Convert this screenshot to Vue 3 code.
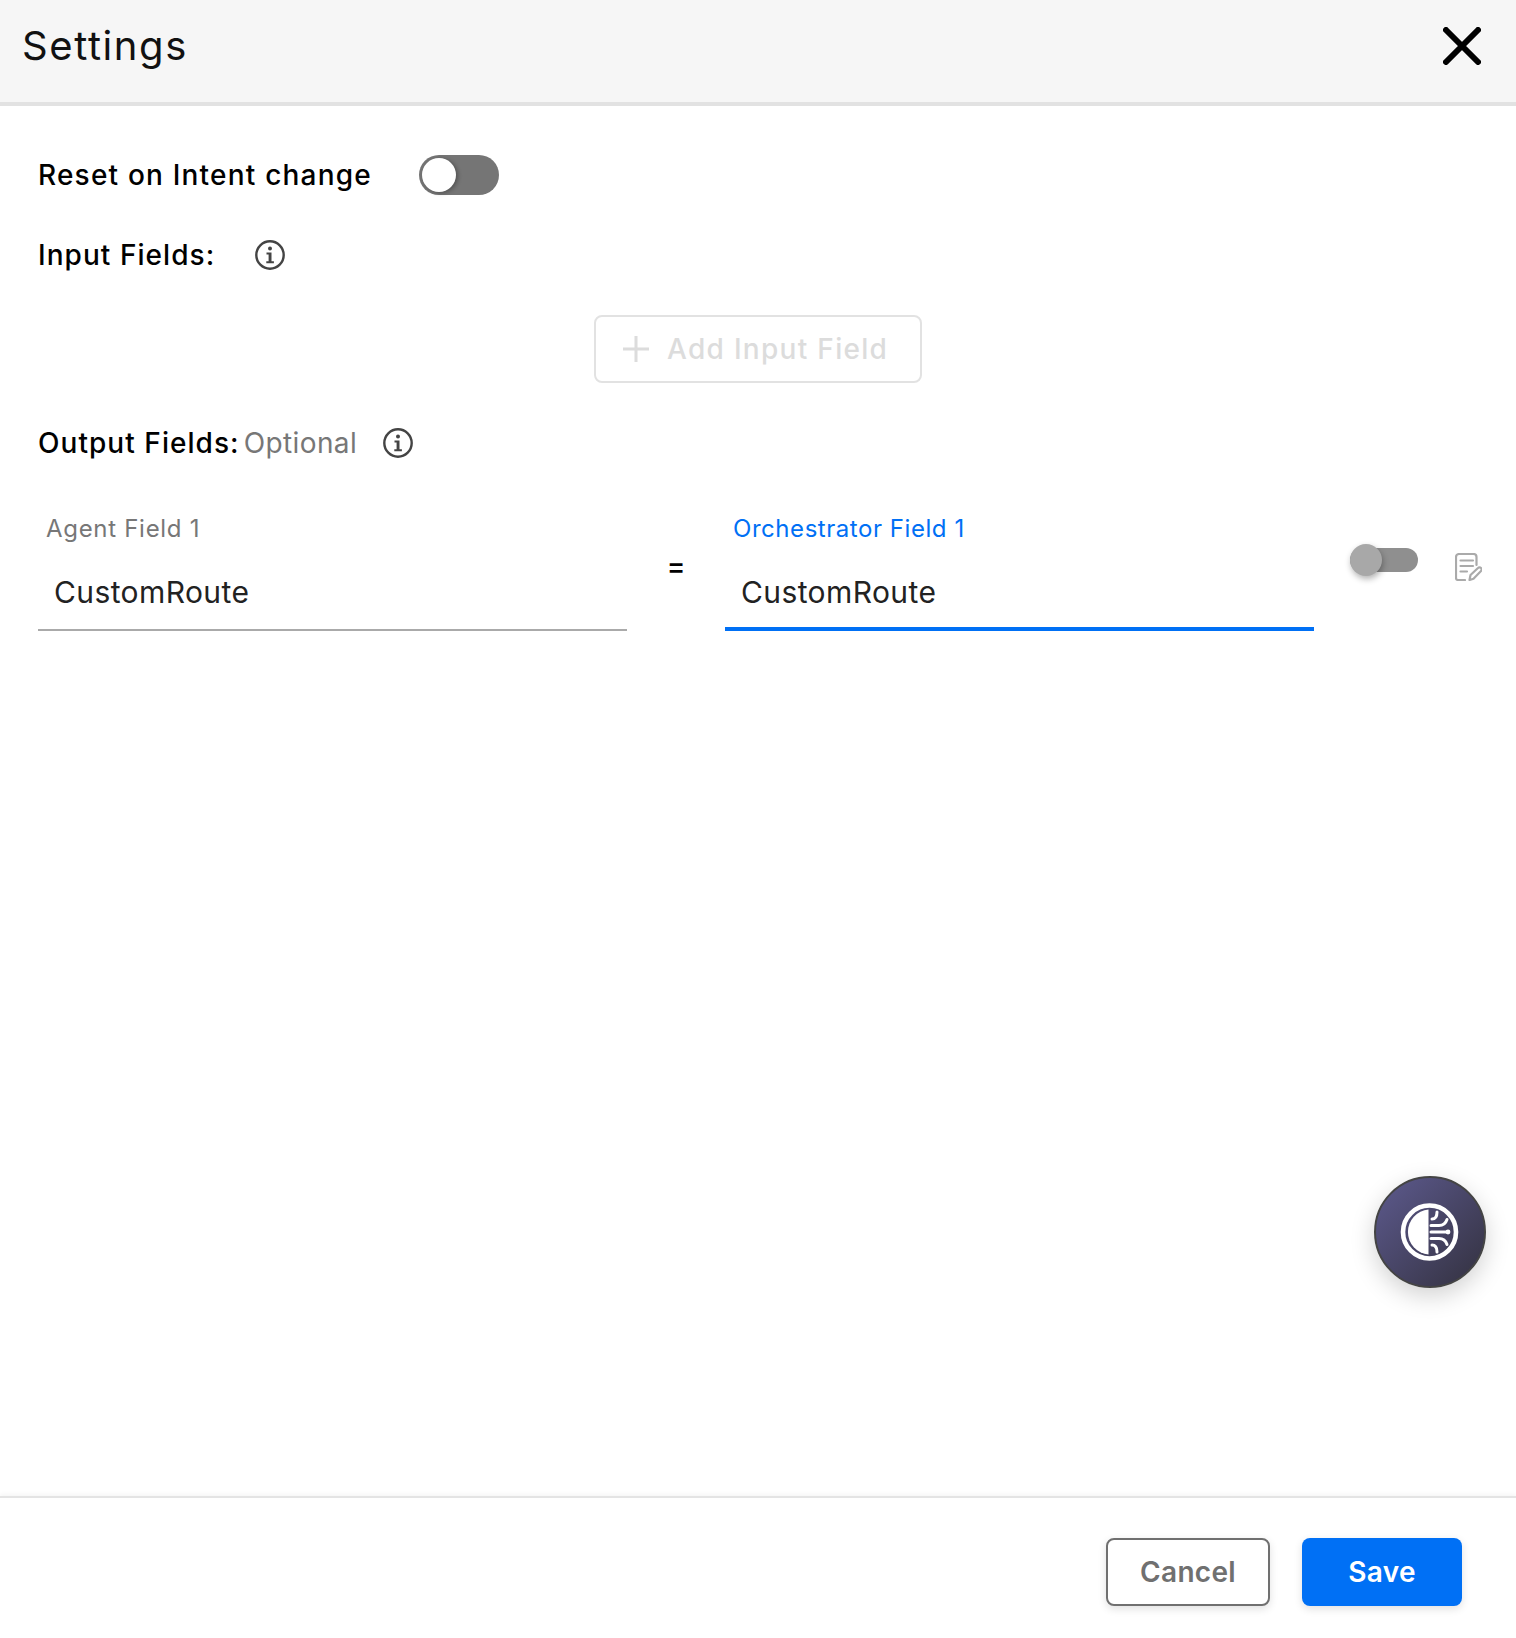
<template>
  <div class="page">
    <header class="head">
      <h1 class="title">Settings</h1>
      <svg class="close" viewBox="0 0 38 38" aria-label="Close">
        <path d="M3 3L35 35M35 3L3 35" stroke="#000" stroke-width="6" stroke-linecap="round" fill="none" />
      </svg>
    </header>

    <main class="body">
      <div class="row">
        <span class="label reset-label">Reset on Intent change</span>
        <div class="switch"><span class="switch-knob"></span></div>
      </div>

      <div class="row row-info">
        <span class="label">Input Fields:</span>
        <svg class="info info-input" viewBox="0 0 30 30">
          <circle cx="15" cy="15" r="13.7" fill="none" stroke="#444" stroke-width="2.4" />
          <circle cx="15" cy="8.6" r="2" fill="#444" />
          <path d="M11.5 12.6h5v8.6h2.4v2h-7.6v-2h2.3v-6.6h-2.1z" fill="#444" />
        </svg>
      </div>

      <div class="add-wrap">
        <button class="add" type="button">
          <svg class="plus" viewBox="0 0 26 26">
            <path d="M13 0V26M0 13H26" stroke="#dcdcdc" stroke-width="3" fill="none" />
          </svg>
          Add Input Field
        </button>
      </div>

      <div class="row row-info">
        <span class="label">Output Fields:</span>
        <span class="optional">Optional</span>
        <svg class="info info-output" viewBox="0 0 30 30">
          <circle cx="15" cy="15" r="13.7" fill="none" stroke="#444" stroke-width="2.4" />
          <circle cx="15" cy="8.6" r="2" fill="#444" />
          <path d="M11.5 12.6h5v8.6h2.4v2h-7.6v-2h2.3v-6.6h-2.1z" fill="#444" />
        </svg>
      </div>

      <div class="mapping">
        <div class="field">
          <div class="field-label agent-label">Agent Field 1</div>
          <div class="field-value">CustomRoute</div>
        </div>
        <div class="equals">=</div>
        <div class="field field-active">
          <div class="field-label">Orchestrator Field 1</div>
          <div class="field-value">CustomRoute</div>
        </div>
        <div class="mini-switch"><span class="mini-knob"></span></div>
        <svg class="doc" viewBox="0 0 27 28">
          <path d="M21.5 12V4a3 3 0 0 0-3-3H4a3 3 0 0 0-3 3v21a2 2 0 0 0 2 2h7" fill="none" stroke="#aaa" stroke-width="2.2" stroke-linecap="round" />
          <path d="M5.5 7.5H18M5.5 13H18M5.5 18.5H12" fill="none" stroke="#aaa" stroke-width="2.2" stroke-linecap="round" />
          <path d="M14.5 27l1-5 7.5-7a2 2 0 0 1 3 3l-7.5 7.800z" fill="none" stroke="#aaa" stroke-width="2.2" stroke-linejoin="round" />
        </svg>
      </div>
    </main>

    <footer class="foot">
      <button class="btn btn-cancel" type="button">Cancel</button>
      <button class="btn btn-save" type="button">Save</button>
    </footer>

    <div class="bot">
      <svg viewBox="0 0 60 60" class="bot-icon">
        <circle cx="29.5" cy="30" r="26.5" fill="none" stroke="#fff" stroke-width="4.6" />
        <path d="M28.5 7.4A22.700 22.700 0 0 0 28.500 52.600z" fill="#fff" />
        <g fill="none" stroke="#fff" stroke-width="3" stroke-linecap="round">
          <path d="M31 30H47" />
          <path d="M31 23.500H39q6 0 8-6" />
          <path d="M31 36.500H39q6 0 8 6" />
          <path d="M32 17q5 0 5-7" />
          <path d="M32 43q5 0 5 7" />
        </g>
        <circle cx="48" cy="30" r="2.400" fill="#fff" />
      </svg>
    </div>
  </div>
</template>

<script setup>
</script>

<style>
html, body { margin: 0; background: #fff; }
</style>

<style scoped>
.page {
  position: relative;
  width: 1516px;
  height: 1638px;
  display: flex;
  flex-direction: column;
  font-family: Inter, "Open Sans", sans-serif;
  color: #000;
  overflow: hidden;
}
.head {
  height: 92px;
  flex: none;
  background: #f6f6f6;
  border-bottom: 4px solid #e2e2e2;
  display: flex;
  align-items: center;
  justify-content: space-between;
  padding: 0 35px 10px 22px;
}
.title {
  margin: 0;
  font-size: 40px;
  font-weight: 400;
  line-height: 46px;
  letter-spacing: 1.6px;
  color: #111;
}
.close { width: 38px; height: 38px; }
.body {
  flex: 1;
  padding: 49px 38px 0;
}
.row {
  display: flex;
  align-items: center;
  height: 40px;
}
.row-info {
  height: 30px;
  margin-top: 45px;
}
.label {
  font-size: 28px;
  font-weight: 500;
  white-space: nowrap;
  line-height: 30px;
  letter-spacing: 1.05px;
}
.reset-label { width: 381px; letter-spacing: 1.2px; }
.switch {
  position: relative;
  width: 80px;
  height: 40px;
  border-radius: 20px;
  background: #757575;
}
.switch-knob {
  position: absolute;
  left: 3px;
  top: 3px;
  width: 34px;
  height: 34px;
  border-radius: 50%;
  background: #fff;
  box-shadow: 2px 1px 4px rgba(0, 0, 0, 0.3);
}
.info { width: 30px; height: 30px; flex: none; }
.info-input { margin-left: 40px; }
.info-output { margin-left: 26px; }
.optional {
  margin-left: 4px;
  font-size: 28px;
  color: #777;
  line-height: 30px;
  letter-spacing: 0.4px;
}
.add-wrap {
  display: flex;
  justify-content: center;
  margin-top: 45px;
  margin-left: -38px;
  margin-right: -38px;
}
.add {
  width: 328px;
  height: 68px;
  box-sizing: border-box;
  border: 2px solid #e2e2e2;
  border-radius: 8px;
  background: #fff;
  color: #dcdcdc;
  font-family: inherit;
  font-size: 28px;
  font-weight: 500;
  letter-spacing: 1.3px;
  display: flex;
  align-items: center;
  justify-content: flex-start;
  padding: 0 0 0 27px;
  white-space: nowrap;
}
.plus { width: 26px; height: 26px; margin-right: 18px; }
.mapping {
  display: flex;
  align-items: flex-start;
  margin-top: 54px;
}
.field { width: 589px; flex: none; }
.field-label {
  padding-left: 8px;
  font-size: 24px;
  line-height: 34px;
  letter-spacing: 0.55px;
  color: #777;
}
.agent-label { letter-spacing: 0.7px; }
.field-value {
  box-sizing: border-box;
  height: 85px;
  padding: 26px 0 0 16px;
  font-size: 30px;
  line-height: 40px;
  letter-spacing: 0.4px;
  color: #222;
  border-bottom: 2px solid #aaa;
}
.field-active .field-label { color: #0070f5; }
.field-active .field-value { border-bottom: 4px solid #0070f5; }
.equals {
  width: 98px;
  flex: none;
  text-align: center;
  font-size: 28px;
  font-weight: 500;
  line-height: 40px;
  margin-top: 34px;
}
.mini-switch {
  position: relative;
  width: 68px;
  height: 24px;
  flex: none;
  margin: 36px 0 0 36px;
  border-radius: 12px;
  background: #8f8f8f;
}
.mini-knob {
  position: absolute;
  left: 0;
  top: -4px;
  width: 32px;
  height: 32px;
  border-radius: 50%;
  background: #a8a8a8;
  box-shadow: 1px 3px 6px rgba(0, 0, 0, 0.3);
}
.doc {
  width: 27px;
  height: 28px;
  flex: none;
  margin: 41px 0 0 37px;
}
.foot {
  height: 142px;
  flex: none;
  box-sizing: border-box;
  border-top: 2px solid #e4e4e4;
  box-shadow: 0 -2px 4px rgba(0, 0, 0, 0.04);
  display: flex;
  justify-content: flex-end;
  gap: 32px;
  padding: 40px 54px 0 0;
}
.btn {
  width: 160px;
  height: 68px;
  box-sizing: border-box;
  border-radius: 8px;
  font-family: inherit;
  font-size: 28px;
  font-weight: 600;
  letter-spacing: 0.3px;
  box-shadow: 0 3px 8px rgba(0, 0, 0, 0.12);
}
.btn-cancel {
  width: 164px;
  background: #fff;
  border: 2px solid #707070;
  color: #707070;
}
.btn-save {
  background: #0070f5;
  border: 0;
  color: #fff;
}
.bot {
  position: absolute;
  left: 1374px;
  top: 1176px;
  width: 112px;
  height: 112px;
  box-sizing: border-box;
  border-radius: 50%;
  border: 2px solid #444;
  background: linear-gradient(135deg, #5d5a8e, #33313f);
  box-shadow: 0 8px 24px rgba(0, 0, 0, 0.18);
  display: flex;
  align-items: center;
  justify-content: center;
}
.bot-icon { width: 60px; height: 60px; }
</style>
